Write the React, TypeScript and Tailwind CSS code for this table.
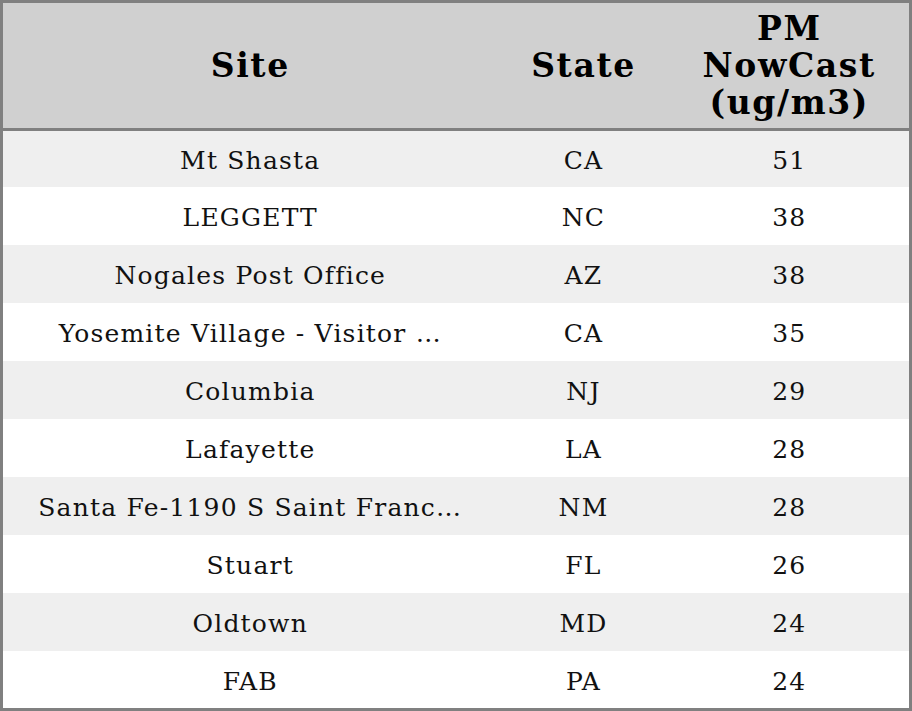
const rows: [string, string, number][] = [
  ["Mt Shasta", "CA", 51],
  ["LEGGETT", "NC", 38],
  ["Nogales Post Office", "AZ", 38],
  ["Yosemite Village - Visitor …", "CA", 35],
  ["Columbia", "NJ", 29],
  ["Lafayette", "LA", 28],
  ["Santa Fe-1190 S Saint Franc…", "NM", 28],
  ["Stuart", "FL", 26],
  ["Oldtown", "MD", 24],
  ["FAB", "PA", 24],
];

export default function App() {
  return (
    <div className="w-[912px] h-[711px] bg-white font-['DejaVu_Serif',serif] text-[#111]">
      <table className="w-full table-fixed border-collapse border-[3px] border-[#808080]">
        <colgroup>
          <col className="w-[496px]" />
          <col className="w-[172px]" />
          <col />
        </colgroup>
        <thead>
          <tr className="bg-[#d0d0d0] border-b-[3px] border-[#808080] text-[33px] font-bold leading-[37px] tracking-[1.6px] text-black">
            <th className="h-[128px] text-center">Site</th>
            <th className="text-center">State</th>
            <th className="text-center">
              PM
              <br />
              NowCast
              <br />
              (ug/m3)
            </th>
          </tr>
        </thead>
        <tbody className="text-[25px] tracking-[1.2px]">
          {rows.map(([site, state, val], i) => (
            <tr key={i} className={i % 2 === 0 ? "bg-[#efefef]" : "bg-white"}>
              <td
                className={
                  "pt-[4px] text-center whitespace-nowrap " +
                  (i === 0 ? "h-[57px]" : i === rows.length - 1 ? "h-[59px]" : "h-[58px]")
                }
              >
                {site}
              </td>
              <td className="pt-[4px] text-center">{state}</td>
              <td className="pt-[4px] text-center">{val}</td>
            </tr>
          ))}
        </tbody>
      </table>
    </div>
  );
}
